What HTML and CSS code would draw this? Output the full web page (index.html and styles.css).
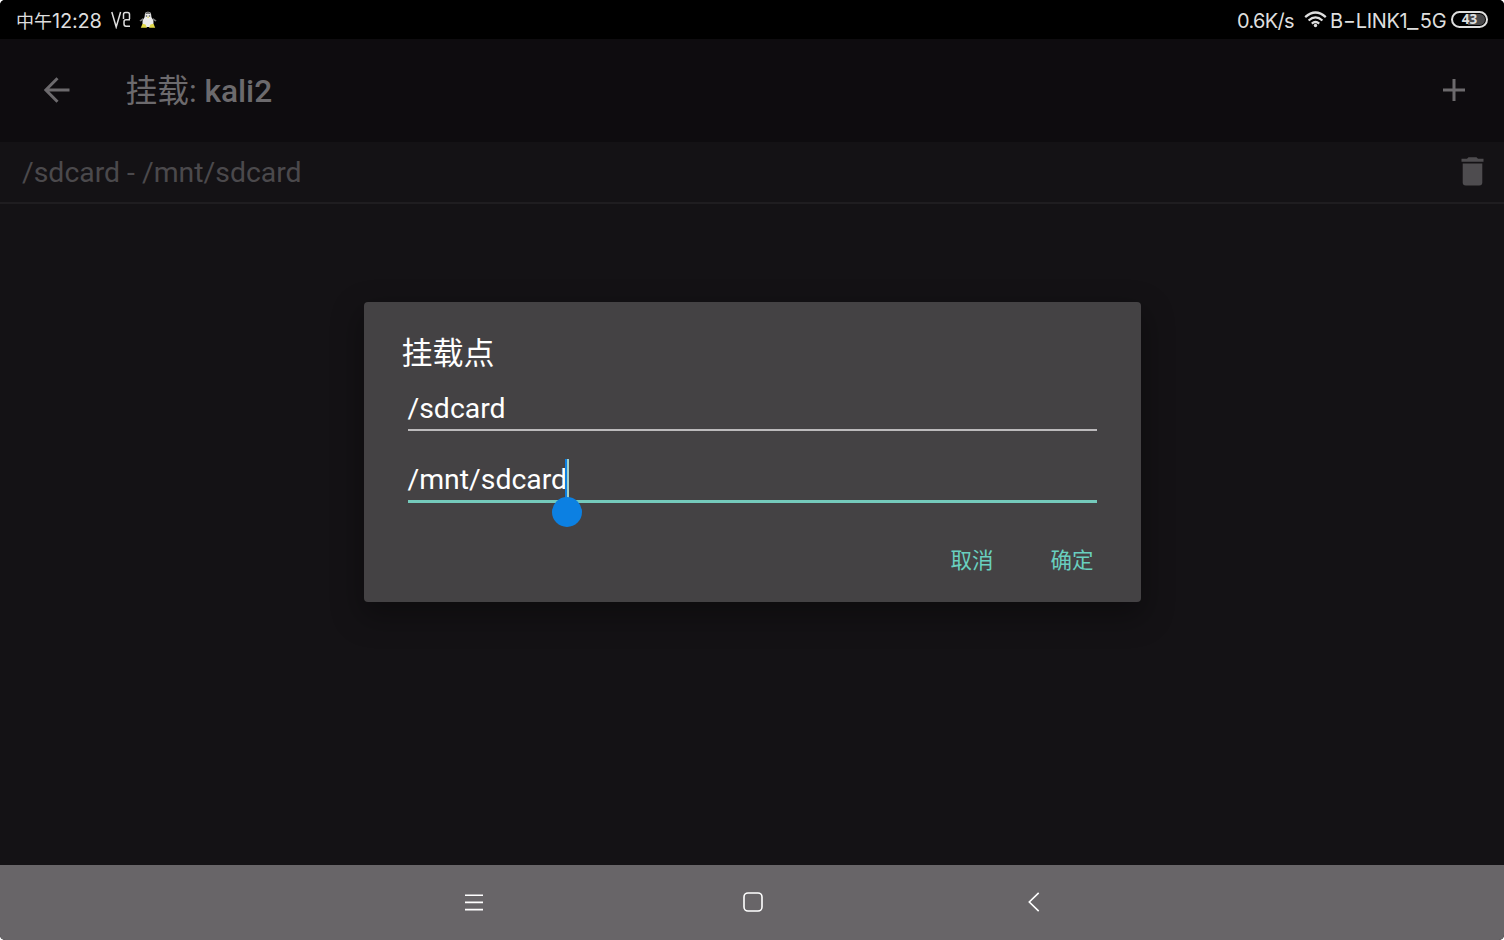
FILE: index.html
```html
<!DOCTYPE html>
<html lang="zh-CN">
<head>
<meta charset="utf-8">
<title>挂载: kali2</title>
<link rel="stylesheet" href="styles.css">
</head>
<body>
<div class="screen">
  <header class="status">
    <span class="clock">中午<span class="digits">12:28</span></span>
    <svg class="vnc" width="20" height="18" viewBox="0 0 20 18"><path d="M.8 1 5.200 16 9.600 1M12.500 8V3.500Q12.500 1.500 14.500 1.500H16.500Q18.500 1.500 18.500 3.500V8M19 8.800H15Q13 8.800 13 10.800V13Q13 15.200 15 15.200H19"/></svg>
    <svg class="tux" width="18" height="18" viewBox="0 0 18 18"><path fill="#777" d="m4 7-3.500 2.500.7 1L5 9zM14 7l3.500 2.500-.7 1L13 9z"/><path fill="#ececec" d="M9 .8C7 .8 5.800 2 5.800 4c0 2-.6 3-1.600 4.500C3 10.500 3.200 14 5 16h8c1.800-2 2-5.500.8-7.500C12.800 7 12.200 6 12.200 4c0-2-1.200-3.200-3.200-3.200z"/><path fill="#666" d="M6.200 3.200Q6.500 1 9 1t2.800 2.200L9 2.800zM6.800 4.300h1.400v1.400H6.800zM9.800 4.300h1.400v1.400H9.800z"/><path fill="#e0d848" d="M8 5.800h2.300L9 7.200zM3.500 12.800l3 .8 1.500 3.200H1.800zM14.500 12.800l-3 .8L10 16.800h6.200z"/></svg>
    <span class="speed">0.6K/s</span>
    <svg class="wifi" width="23" height="17" viewBox="0 0 23 17"><path d="M1.200 6.200Q11.500-3.200 21.800 6.200M4.600 9.500Q11.500 3.300 18.400 9.500M7.800 12.600Q11.500 9.400 15.200 12.600"/><circle cx="11.500" cy="14.500" r="1.700"/></svg>
    <span class="ssid">B<span class="dash">-</span>LINK1<span class="low">_</span>5G</span>
    <span class="battery">43</span>
  </header>
  <div class="appbar">
    <svg class="back" width="26" height="26" viewBox="0 0 26 26"><path d="M25.500 13H2M13.500 1.300 1.800 13l11.700 11.700"/></svg>
    <h1 class="title">挂载: <b>kali2</b></h1>
    <svg class="add" width="22" height="22" viewBox="0 0 22 22"><path d="M11 0v22M0 11h22"/></svg>
  </div>
  <div class="row">
    <span class="path">/sdcard - /mnt/sdcard</span>
    <svg class="trash" width="23" height="29" viewBox="0 0 23 29"><path d="M.500 1.700H6L7.500.300h8L17 1.700h5.500v3H.500zM1.700 6.500h19.600v19q0 3-3 3H4.700q-3 0-3-3z"/></svg>
  </div>
  <main class="content">
    <section class="dialog">
      <h2 class="heading">挂载点</h2>
      <div class="field first">/sdcard</div>
      <div class="field focused"><span class="value">/mnt/sdcard<i class="caret"></i><i class="handle"></i></span></div>
      <div class="actions"><span class="action">取消</span><span class="action">确定</span></div>
    </section>
  </main>
  <nav class="nav">
    <svg class="menu" width="18" height="17" viewBox="0 0 18 17"><path d="M0 1.200h18M0 8.400h18M0 15.600h18"/></svg>
    <svg class="home" width="20" height="20" viewBox="0 0 20 20"><rect x="1" y="1" width="18" height="18" rx="4"/></svg>
    <svg class="prev" width="12" height="20" viewBox="0 0 12 20"><path d="M10.700.900 1.300 10l9.400 9.100"/></svg>
  </nav>
</div>
</body>
</html>
```
FILE: styles.css
```css
body { margin: 0; background: #fff; }
.screen {
  width: 1504px; height: 940px; overflow: hidden; border-radius: 5px;
  display: flex; flex-direction: column;
  background: #141215; color: #fff;
  font-family: Roboto, "Noto Sans CJK SC", sans-serif;
}
.screen svg { flex: none; }
.status {
  height: 39px; flex: none; background: #000; color: #dedede;
  display: flex; align-items: center; box-sizing: border-box; padding: 0 16px;
  font-family: Inter, "Noto Sans CJK SC", sans-serif;
  font-size: 20px; line-height: 37px; white-space: nowrap;
}
.clock, .speed, .ssid { padding-top: 3px; }
.clock { width: 95px; font-size: 18px; }
.digits { font-size: 20px; letter-spacing: -.2px; }
.vnc { fill: none; stroke: #dedede; stroke-width: 1.5; margin-top: 1px; }
.tux { margin-left: 8px; }
.speed { margin-left: auto; width: 67px; letter-spacing: -.7px; }
.wifi { fill: #dedede; }
.wifi path { fill: none; stroke: #dedede; stroke-width: 2.3; }
.ssid { width: 116px; margin-left: 3px; letter-spacing: -.35px; }
.dash { display: inline-block; width: 13px; transform: scaleX(1.4); transform-origin: left; }
.low { display: inline-block; width: 12.5px; transform: scaleX(1.25); transform-origin: left; }
.battery {
  width: 37px; height: 17px; margin-left: 5px; box-sizing: border-box;
  border: 2px solid #dedede; border-radius: 9px;
  background: linear-gradient(90deg, #000 0 45%, #48484a 45%) content-box;
  padding: 1px; font-family: "Open Sans", sans-serif; font-size: 13.5px; font-weight: 700; line-height: 11px; text-align: center;
}
.appbar {
  height: 103px; flex: none; box-sizing: border-box; padding: 0 39px 2px 44px;
  display: flex; align-items: center; background: #0e0c0f; color: #6c6a6d;
}
.back, .add { fill: none; stroke: #6c6a6d; stroke-width: 3; }
.back { margin-left: -.5px; }
.title { margin: 5px auto 0 56px; font-size: 31.700px; line-height: 40px; font-weight: 400; }
.title b { font-weight: 500; }
.row {
  height: 62px; flex: none; box-sizing: border-box; border-bottom: 2px solid #1f1d20;
  padding: 0 20px 0 22px; display: flex; align-items: center; justify-content: space-between;
  color: #4b494c; font-size: 28.400px;
}
.trash { fill: #4e4c4f; margin-bottom: 2px; }
.content { flex: 1; display: flex; justify-content: center; align-items: flex-start; }
.dialog {
  width: 777px; height: 300px; margin: 98px 0 0; box-sizing: border-box; padding: 32px 44px 0 38px;
  border-radius: 4px; background: #444244; box-shadow: 0 12px 30px 4px rgba(0,0,0,.3);
}
.heading { margin: 0; font-size: 31px; line-height: 40px; font-weight: 400; }
.field {
  margin-left: 6px; height: 55px; line-height: 70px; font-size: 28.400px;
  border-bottom: 2px solid #bcbabc;
}
.field.first { margin-top: 0; }
.focused { height: 69px; line-height: 98px; border-bottom: 3px solid #75cabc; }
.value { position: relative; display: inline-block; height: 70px; }
.caret {
  position: absolute; right: -2px; top: 28px; width: 2px; height: 39px;
  background: #9fd0cc; border-left: 2px solid #0c80e2;
}
.handle {
  position: absolute; right: -15px; top: 66px; width: 30px; height: 30px;
  border-radius: 50%; background: #0c80e2;
}
.actions {
  display: flex; justify-content: flex-end; gap: 57px; margin-top: 42px; padding-right: 3px;
  color: #69cfbf; font-size: 21.500px; line-height: 32px;
}
.nav {
  height: 75px; flex: none; background: #686568; display: grid; align-items: center; justify-items: start;
  grid-template-columns: 278px 285px 1fr; box-sizing: border-box; padding: 0 0 1px 465px;
}
.nav svg { fill: none; stroke: #fff; stroke-width: 1.600; }
```
